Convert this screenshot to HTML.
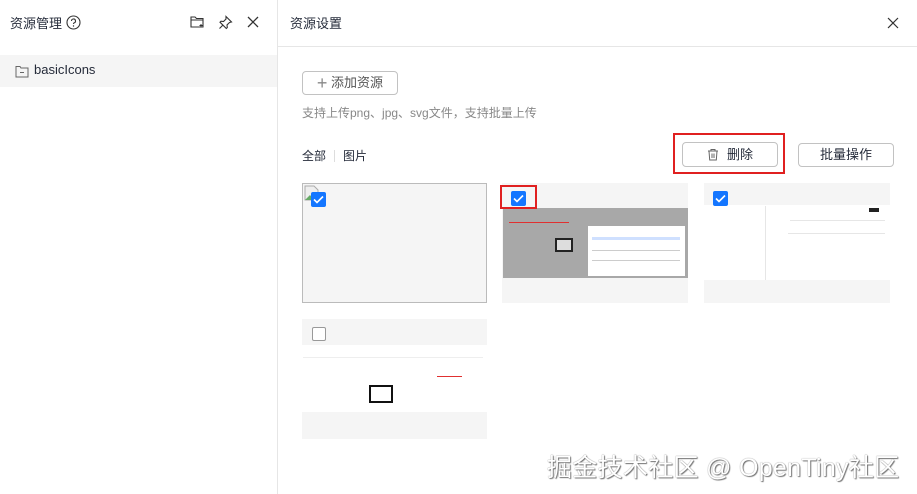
<!DOCTYPE html>
<html><head><meta charset="utf-8"><style>
*{margin:0;padding:0;box-sizing:border-box}
body{width:917px;height:494px;background:#fff;position:relative;overflow:hidden;font-family:"Liberation Sans","Noto Sans CJK SC",sans-serif;color:#252b3a}
.a{position:absolute}
.cb{position:absolute;width:15px;height:15px;border-radius:2px;background:#1476ff}
.cb svg{position:absolute;left:2px;top:3px}
.btn{position:absolute;border:1px solid #c2c2c2;border-radius:4px;background:#fff;font-size:13px;color:#252b3a;text-align:center}
.card{position:absolute;background:#f5f5f5}
.ln{position:absolute;height:1px;background:#ccc}
</style></head><body>
<div class="a" style="left:277px;top:0;width:1px;height:494px;background:#e6e6e6"></div>
<div class="a" style="left:278px;top:46px;width:639px;height:1px;background:#e6e6e6"></div>
<div class="a" style="left:10px;top:13px;font-size:13px">资源管理</div>
<svg class="a" style="left:66px;top:15px" width="15" height="15" viewBox="0 0 15 15"><circle cx="7.5" cy="7.5" r="6.5" fill="none" stroke="#333" stroke-width="1.1"/><path d="M5.5 6a2 2 0 1 1 2.6 1.9c-.5.2-.6.5-.6 1.1" fill="none" stroke="#333" stroke-width="1.1"/><circle cx="7.5" cy="11" r=".7" fill="#333"/></svg>
<svg class="a" style="left:190px;top:15px" width="15" height="14" viewBox="0 0 15 14"><path d="M1 2h4l1.5 1.5H13V12H1z M1 5h12" fill="none" stroke="#333" stroke-width="1.1"/><path d="M11 9v3M9.5 10.5h3" stroke="#333" stroke-width="1"/></svg>
<svg class="a" style="left:218px;top:15px" width="15" height="15" viewBox="0 0 15 15"><path d="M8 1.5l5.5 5.5-2 .5-2.5 2.5.3 2.5-1 1L2 7.2l1-1 2.5.3L8 4z M4.5 10.5L1.5 13.5" fill="none" stroke="#333" stroke-width="1.1"/></svg>
<svg class="a" style="left:247px;top:16px" width="12" height="12" viewBox="0 0 12 12"><path d="M1 1l10 10M11 1L1 11" stroke="#333" stroke-width="1.3"/></svg>
<div class="a" style="left:0;top:55px;width:277px;height:32px;background:#f5f5f5"></div>
<svg class="a" style="left:15px;top:65px" width="14" height="13" viewBox="0 0 14 13"><path d="M1 1.5h4l1 1.5h7V12H1z" fill="none" stroke="#666" stroke-width="1"/><path d="M5 7.5h4" stroke="#666"/></svg>
<div class="a" style="left:34px;top:62px;font-size:13px;color:#252b3a">basicIcons</div>
<div class="a" style="left:290px;top:13px;font-size:13px">资源设置</div>
<svg class="a" style="left:887px;top:17px" width="12" height="12" viewBox="0 0 12 12"><path d="M1 1l10 10M11 1L1 11" stroke="#333" stroke-width="1.2"/></svg>
<div class="btn" style="left:302px;top:71px;width:96px;height:24px;line-height:22px;color:#555"><span style="font-size:18px;color:#888;vertical-align:-2px">+</span> 添加资源</div>
<div class="a" style="left:302px;top:104px;font-size:12px;color:#888">支持上传png、jpg、svg文件，支持批量上传</div>
<div class="a" style="left:302px;top:147px;font-size:12px;color:#252b3a">全部</div>
<div class="a" style="left:334px;top:150px;width:1px;height:12px;background:#ddd"></div>
<div class="a" style="left:343px;top:147px;font-size:12px;color:#252b3a">图片</div>
<div class="a" style="left:673px;top:133px;width:112px;height:41px;border:2px solid #e02020"></div>
<div class="btn" style="left:682px;top:142px;width:96px;height:25px;line-height:23px"><svg style="vertical-align:-2px;margin-right:8px" width="12" height="13" viewBox="0 0 12 13"><path d="M1 3h10M4 3V1.5h4V3M2 3l.7 9h6.6L10 3M5 5.5v4.5M7 5.5v4.5" fill="none" stroke="#666" stroke-width="1"/></svg>删除</div>
<div class="btn" style="left:798px;top:143px;width:96px;height:24px;line-height:22px">批量操作</div>
<div class="card" style="left:302px;top:183px;width:185px;height:120px;border:1px solid #bbb"></div>
<svg class="a" style="left:304px;top:185px" width="16" height="16" viewBox="0 0 16 16"><path d="M1 1h9l4 4v10H1z" fill="#eee" stroke="#aaa"/><path d="M1 15l5-5 4 5z" fill="#6a6"/></svg>
<div class="cb" style="left:311px;top:192px"><svg width="11" height="9" viewBox="0 0 11 9"><path d="M1 4.5l3 3 6-6" fill="none" stroke="#fff" stroke-width="1.6"/></svg></div>
<div class="card" style="left:502px;top:183px;width:186px;height:120px"></div>
<div class="a" style="left:503px;top:208px;width:185px;height:70px;background:#a8a8a8"></div>
<div class="a" style="left:588px;top:226px;width:97px;height:50px;background:#fff"></div>
<div class="ln" style="left:592px;top:237px;width:88px;background:#cfe0ff;height:3px"></div>
<div class="ln" style="left:592px;top:250px;width:88px"></div>
<div class="ln" style="left:592px;top:260px;width:88px"></div>
<div class="a" style="left:555px;top:238px;width:18px;height:14px;border:2px solid #222;background:#ddd"></div>
<div class="a" style="left:509px;top:222px;width:60px;height:1px;background:#e03030"></div>
<div class="a" style="left:500px;top:185px;width:37px;height:24px;border:2px solid #e02020"></div>
<div class="cb" style="left:511px;top:191px"><svg width="11" height="9" viewBox="0 0 11 9"><path d="M1 4.5l3 3 6-6" fill="none" stroke="#fff" stroke-width="1.6"/></svg></div>
<div class="card" style="left:704px;top:183px;width:186px;height:120px"></div>
<div class="a" style="left:704px;top:205px;width:186px;height:75px;background:#fff"></div>
<div class="a" style="left:765px;top:206px;width:1px;height:74px;background:#e6e6e6"></div>
<div class="ln" style="left:790px;top:220px;width:95px;background:#e6e6e6"></div>
<div class="ln" style="left:788px;top:233px;width:97px;background:#e6e6e6"></div>
<div class="a" style="left:869px;top:208px;width:10px;height:4px;background:#222"></div>
<div class="cb" style="left:713px;top:191px"><svg width="11" height="9" viewBox="0 0 11 9"><path d="M1 4.5l3 3 6-6" fill="none" stroke="#fff" stroke-width="1.6"/></svg></div>
<div class="card" style="left:302px;top:319px;width:185px;height:120px"></div>
<div class="a" style="left:302px;top:345px;width:185px;height:67px;background:#fff"></div>
<div class="ln" style="left:303px;top:357px;width:180px;background:#eee"></div>
<div class="ln" style="left:437px;top:376px;width:25px;background:#e03030"></div>
<div class="a" style="left:369px;top:385px;width:24px;height:18px;border:2px solid #111;background:#fff"></div>
<div class="a" style="left:312px;top:327px;width:14px;height:14px;border:1px solid #999;border-radius:2px;background:#fff"></div>
<div class="a" style="left:547px;top:448px;font-size:25px;color:#fff;text-shadow:0 0 1px #666,1px 1px 1px #777;letter-spacing:0.3px">掘金技术社区 @ OpenTiny社区</div>
</body></html>
